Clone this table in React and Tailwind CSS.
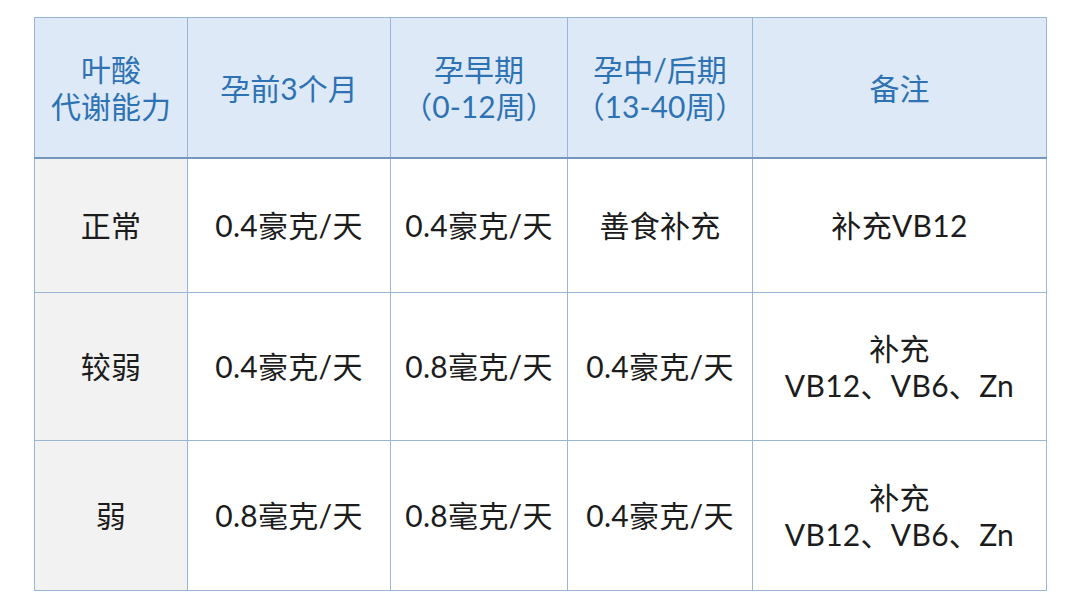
const cols = ['w-[153px]', 'w-[203px]', 'w-[177px]', 'w-[185px]', 'w-[294px]']

const head = [
  ['叶酸', '代谢能力'],
  ['孕前3个月'],
  ['孕早期', '（0-12周）'],
  ['孕中/后期', '（13-40周）'],
  ['备注'],
]

const rows = [
  { h: 'h-[135px]', cells: [['正常'], ['0.4豪克/天'], ['0.4豪克/天'], ['善食补充'], ['补充VB12']] },
  { h: 'h-[148px]', cells: [['较弱'], ['0.4豪克/天'], ['0.8毫克/天'], ['0.4豪克/天'], ['补充', 'VB12、VB6、Zn']] },
  { h: 'h-[150px]', cells: [['弱'], ['0.8毫克/天'], ['0.8毫克/天'], ['0.4豪克/天'], ['补充', 'VB12、VB6、Zn']] },
]

function Lines({ lines }) {
  return lines.map((l, i) => <div key={i}>{l}</div>)
}

export default function App() {
  return (
    <div className="w-[1080px] h-[607px] bg-white pt-[17px] pl-[34px] font-['Lato','Noto_Sans_CJK_SC',sans-serif] text-[30px] leading-[37px]">
      <table className="border-collapse table-fixed text-center">
        <thead>
          <tr className="h-[140px] bg-[#dde9f6] text-[#2d72b3] border-b-2 border-[#7397bd]">
            {head.map((c, i) => (
              <th key={i} className={`${cols[i]} font-normal border border-[#9ab6d4] align-middle pt-[2px]`}>
                <Lines lines={c} />
              </th>
            ))}
          </tr>
        </thead>
        <tbody>
          {rows.map((r, ri) => (
            <tr key={ri} className={r.h}>
              {r.cells.map((c, i) => (
                <td key={i} className={`border border-[#9ab6d4] align-middle text-[#1c1c1c] tracking-[0.3px] ${i === 0 ? 'bg-[#f2f2f2]' : 'bg-white'}`}>
                  <Lines lines={c} />
                </td>
              ))}
            </tr>
          ))}
        </tbody>
      </table>
    </div>
  )
}
